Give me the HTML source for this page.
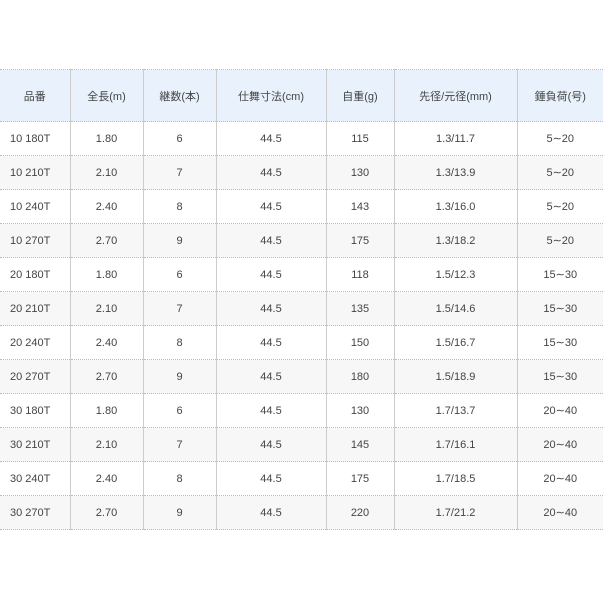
<!DOCTYPE html><html><head><style>
body{margin:0;background:#fff;font-family:"Liberation Sans","Noto Sans CJK JP",sans-serif;font-size:11px;color:#444}
table{position:absolute;left:0;top:69px;width:603px;border-collapse:collapse;table-layout:fixed}
td,th{height:33px;border-bottom:1px dotted #bbb;border-left:1px solid #ccc;text-align:center;padding:0;font-weight:normal}
th{height:51px;background:#e9f2fc;border-top:1px dotted #bbb}
td:first-child,th:first-child{border-left:none}
td:first-child{text-align:left;padding-left:10px}
tr:nth-child(odd) td{background:#f7f7f7}
.t{font-family:"DejaVu Sans",sans-serif}
</style></head><body>
<table>
<colgroup><col style="width:70px"><col style="width:73px"><col style="width:73px"><col style="width:110px"><col style="width:68px"><col style="width:123px"><col style="width:86px"></colgroup>
<tr><th>品番</th><th>全長(m)</th><th>継数(本)</th><th>仕舞寸法(cm)</th><th>自重(g)</th><th>先径/元径(mm)</th><th>錘負荷(号)</th></tr>
<tr><td>10 180T</td><td>1.80</td><td>6</td><td>44.5</td><td>115</td><td>1.3/11.7</td><td>5<span class="t">∼</span>20</td></tr>
<tr><td>10 210T</td><td>2.10</td><td>7</td><td>44.5</td><td>130</td><td>1.3/13.9</td><td>5<span class="t">∼</span>20</td></tr>
<tr><td>10 240T</td><td>2.40</td><td>8</td><td>44.5</td><td>143</td><td>1.3/16.0</td><td>5<span class="t">∼</span>20</td></tr>
<tr><td>10 270T</td><td>2.70</td><td>9</td><td>44.5</td><td>175</td><td>1.3/18.2</td><td>5<span class="t">∼</span>20</td></tr>
<tr><td>20 180T</td><td>1.80</td><td>6</td><td>44.5</td><td>118</td><td>1.5/12.3</td><td>15<span class="t">∼</span>30</td></tr>
<tr><td>20 210T</td><td>2.10</td><td>7</td><td>44.5</td><td>135</td><td>1.5/14.6</td><td>15<span class="t">∼</span>30</td></tr>
<tr><td>20 240T</td><td>2.40</td><td>8</td><td>44.5</td><td>150</td><td>1.5/16.7</td><td>15<span class="t">∼</span>30</td></tr>
<tr><td>20 270T</td><td>2.70</td><td>9</td><td>44.5</td><td>180</td><td>1.5/18.9</td><td>15<span class="t">∼</span>30</td></tr>
<tr><td>30 180T</td><td>1.80</td><td>6</td><td>44.5</td><td>130</td><td>1.7/13.7</td><td>20<span class="t">∼</span>40</td></tr>
<tr><td>30 210T</td><td>2.10</td><td>7</td><td>44.5</td><td>145</td><td>1.7/16.1</td><td>20<span class="t">∼</span>40</td></tr>
<tr><td>30 240T</td><td>2.40</td><td>8</td><td>44.5</td><td>175</td><td>1.7/18.5</td><td>20<span class="t">∼</span>40</td></tr>
<tr><td>30 270T</td><td>2.70</td><td>9</td><td>44.5</td><td>220</td><td>1.7/21.2</td><td>20<span class="t">∼</span>40</td></tr>
</table></body></html>
